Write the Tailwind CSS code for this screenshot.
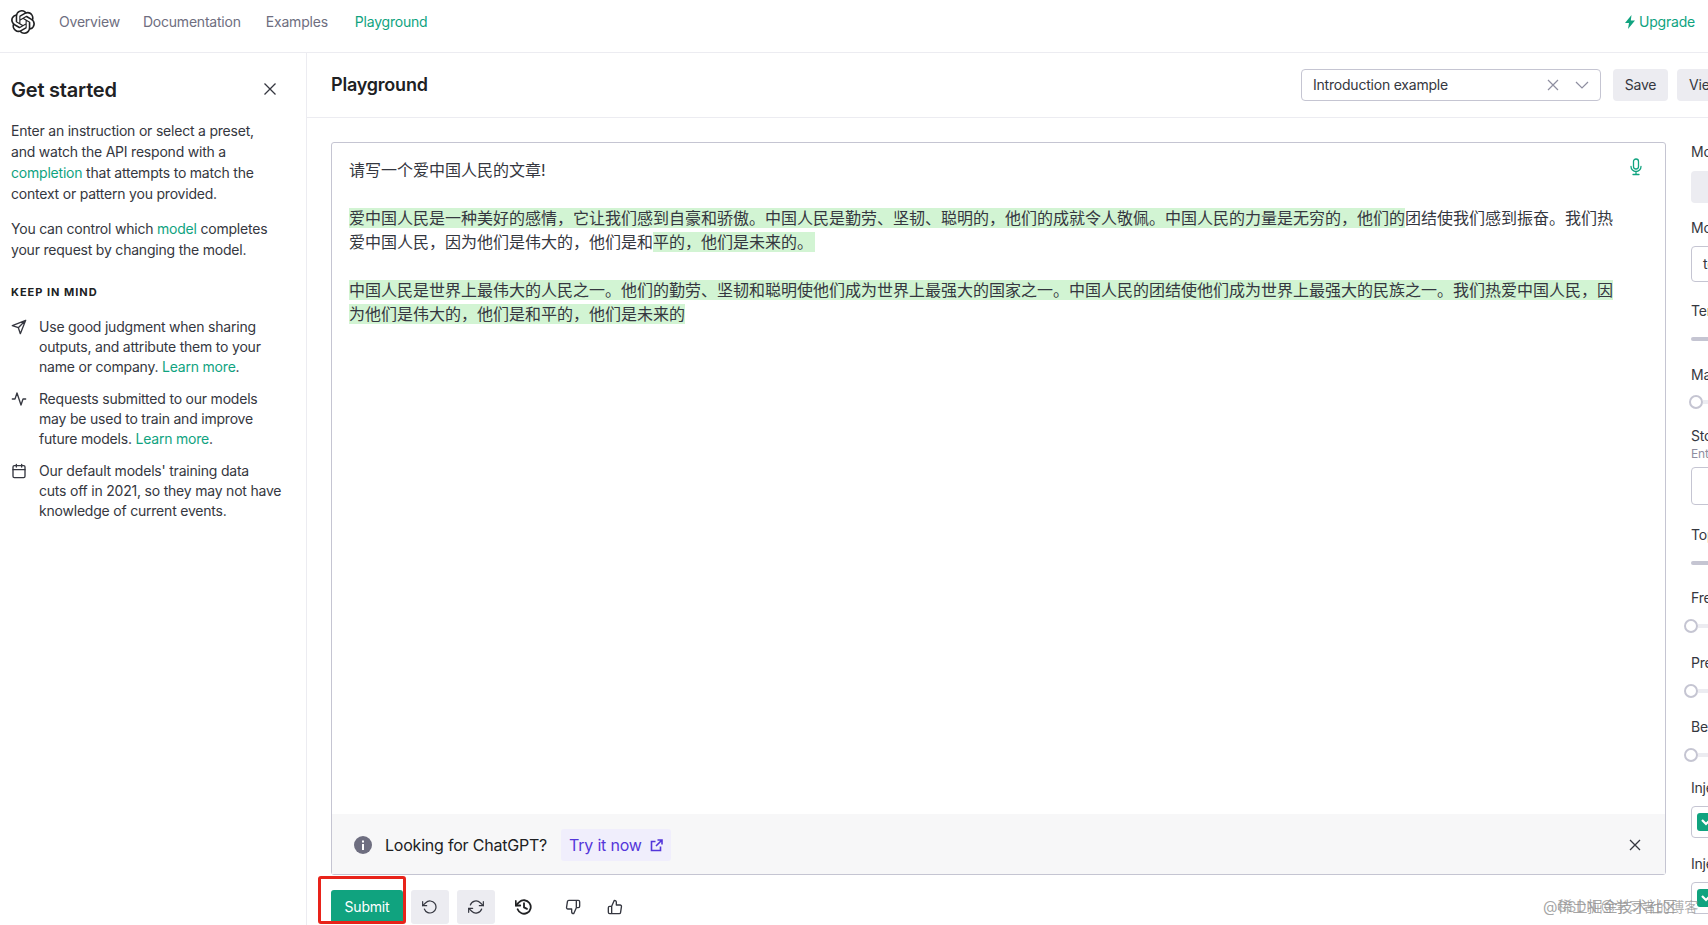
<!DOCTYPE html>
<html>
  <head>
    <meta charset="UTF-8" />
    <title>Playground - OpenAI API</title>
    <script src="https://cdn.jsdelivr.net/npm/@tailwindcss/browser@4"></script>
  </head>
  <body class="h-[925px] w-[1708px] overflow-hidden bg-white text-[#353740] text-sm tracking-[-0.015em] [font-family:Inter,'Noto_Sans_CJK_SC',sans-serif] relative">
    <!-- top nav -->
    <nav class="h-[53px] border-b border-[#ececf1] flex items-center pl-[11px] pr-[13px] pb-[9px] text-[#6e6e80]">
      <svg class="w-[24px] h-[24px] mr-[24px] text-[#202123]" viewBox="0 0 24 24" fill="currentColor"><path d="M22.2819 9.8211a5.9847 5.9847 0 0 0-.5157-4.9108 6.0462 6.0462 0 0 0-6.5098-2.9A6.0651 6.0651 0 0 0 4.9807 4.1818a5.9847 5.9847 0 0 0-3.9977 2.9 6.0462 6.0462 0 0 0 .7427 7.0966 5.98 5.98 0 0 0 .511 4.9107 6.051 6.051 0 0 0 6.5146 2.9001A5.9847 5.9847 0 0 0 13.2599 24a6.0557 6.0557 0 0 0 5.7718-4.2058 5.9894 5.9894 0 0 0 3.9977-2.9001 6.0557 6.0557 0 0 0-.7475-7.0729zm-9.022 12.6081a4.4755 4.4755 0 0 1-2.8764-1.0408l.1419-.0804 4.7783-2.7582a.7948.7948 0 0 0 .3927-.6813v-6.7369l2.02 1.1686a.071.071 0 0 1 .038.052v5.5826a4.504 4.504 0 0 1-4.4945 4.4944zm-9.6607-4.1254a4.4708 4.4708 0 0 1-.5346-3.0137l.142.0852 4.783 2.7582a.7712.7712 0 0 0 .7806 0l5.8428-3.3685v2.3324a.0804.0804 0 0 1-.0332.0615L9.74 19.9502a4.4992 4.4992 0 0 1-6.1408-1.6464zM2.3408 7.8956a4.485 4.485 0 0 1 2.3655-1.9728V11.6a.7664.7664 0 0 0 .3879.6765l5.8144 3.3543-2.0201 1.1685a.0757.0757 0 0 1-.071 0l-4.8303-2.7865A4.504 4.504 0 0 1 2.3408 7.872zm16.5963 3.8558L13.1038 8.364 15.1192 7.2a.0757.0757 0 0 1 .071 0l4.8303 2.7913a4.4944 4.4944 0 0 1-.6765 8.1042v-5.6772a.79.79 0 0 0-.407-.667zm2.0107-3.0231l-.142-.0852-4.7735-2.7818a.7759.7759 0 0 0-.7854 0L9.409 9.2297V6.8974a.0662.0662 0 0 1 .0284-.0615l4.8303-2.7866a4.4992 4.4992 0 0 1 6.6802 4.66zM8.3065 12.863l-2.02-1.1638a.0804.0804 0 0 1-.038-.0567V6.0742a4.4992 4.4992 0 0 1 7.3757-3.4537l-.142.0805L8.704 5.459a.7948.7948 0 0 0-.3927.6813zm1.0976-2.3654l2.602-1.4998 2.6069 1.4998v2.9994l-2.5974 1.4997-2.6067-1.4997Z"/></svg>
      <a class="mr-[23px]">Overview</a>
      <a class="mr-[25px]">Documentation</a>
      <a class="mr-[27px]">Examples</a>
      <a class="text-[#10a37f]">Playground</a>
      <a class="ml-auto flex items-center gap-[3px] text-[#10a37f]">
        <svg class="w-[12px] h-[14px]" viewBox="0 0 12 14" fill="currentColor"><path d="M7.500 0 1 8h4l-1 6 7-8.500H6.800z"/></svg>
        Upgrade
      </a>
    </nav>

    <div class="flex h-[872px]">
      <!-- sidebar -->
      <aside class="w-[307px] shrink-0 border-r border-[#ececf1] pl-[11px] pr-[28px] leading-[21px]">
        <div class="flex items-center justify-between pr-[1px] mt-[24px] mb-[17px]">
          <h2 class="text-xl font-semibold text-[#202123] leading-[26px]">Get started</h2>
          <svg class="w-[14px] h-[14px] mb-[2px] text-[#353740]" viewBox="0 0 14 14" fill="none" stroke="currentColor" stroke-width="1.3"><path d="M1.500 1.500l11 11M12.500 1.500l-11 11"/></svg>
        </div>
        <p class="mb-[14px]">Enter an instruction or select a preset, and watch the API respond with a <a class="text-[#10a37f]">completion</a> that attempts to match the context or pattern you provided.</p>
        <p class="mb-[22px]">You can control which <a class="text-[#10a37f]">model</a> completes your request by changing the model.</p>
        <h3 class="text-[11px] font-bold tracking-[0.09em] text-[#202123] leading-[20px] mb-[15px]">KEEP IN MIND</h3>
        <ul class="flex flex-col gap-[12px] leading-[20px]">
          <li class="flex gap-[12px]">
            <svg class="w-[16px] h-[16px] shrink-0 mt-[2px]" viewBox="0 0 24 24" fill="none" stroke="currentColor" stroke-width="2" stroke-linejoin="round" stroke-linecap="round"><path d="M22 2 2 10l9 3 3 9zM22 2 11 13"/></svg>
            <span>Use good judgment when sharing outputs, and attribute them to your name or company. <a class="text-[#10a37f]">Learn more</a>.</span>
          </li>
          <li class="flex gap-[12px]">
            <svg class="w-[16px] h-[16px] shrink-0 mt-[2px]" viewBox="0 0 24 24" fill="none" stroke="currentColor" stroke-width="2" stroke-linejoin="round" stroke-linecap="round"><path d="M22 12h-4l-3 9L9 3l-3 9H2"/></svg>
            <span>Requests submitted to our models may be used to train and improve future models. <a class="text-[#10a37f]">Learn more</a>.</span>
          </li>
          <li class="flex gap-[12px]">
            <svg class="w-[16px] h-[16px] shrink-0 mt-[2px]" viewBox="0 0 24 24" fill="none" stroke="currentColor" stroke-width="2" stroke-linejoin="round" stroke-linecap="round"><rect x="3" y="4" width="18" height="18" rx="2"/><path d="M16 2v4M8 2v4M3 10h18"/></svg>
            <span class="whitespace-nowrap">Our default models' training data<br>cuts off in 2021, so they may not have<br>knowledge of current events.</span>
          </li>
        </ul>
      </aside>

      <main class="w-[1500px] shrink-0">
        <!-- title row -->
        <div class="h-[65px] border-b border-[#ececf1] flex items-center pl-[24px]">
          <h1 class="text-lg font-semibold text-[#202123] w-[970px]">Playground</h1>
          <div class="w-[300px] h-[32px] border border-[#c5c5d2] rounded-[4px] flex items-center pl-[11px] pr-[11px]">
            <span>Introduction example</span>
            <svg class="ml-auto w-[12px] h-[12px] text-[#8e8ea0]" viewBox="0 0 12 12" fill="none" stroke="currentColor" stroke-width="1.2"><path d="M1 1l10 10M11 1 1 11"/></svg>
            <svg class="ml-[16px] w-[14px] h-[9px] text-[#8e8ea0]" viewBox="0 0 14 9" fill="none" stroke="currentColor" stroke-width="1.2"><path d="M1 1l6 6 6-6"/></svg>
          </div>
          <button class="ml-[12px] w-[55px] h-[32px] bg-[#ececf1] rounded-[4px]">Save</button>
          <button class="ml-[9px] h-[32px] px-[12px] bg-[#ececf1] rounded-[4px] whitespace-nowrap">View code</button>
        </div>

        <div class="flex pl-[24px] pt-[24px]">
          <div class="w-[1335px] shrink-0">
            <!-- editor -->
            <div class="h-[733px] border border-[#c5c5d2] rounded-[3px] flex flex-col relative">
              <svg class="absolute top-[15px] right-[22px] w-[14px] h-[18px] text-[#10a37f]" viewBox="0 0 14 18" fill="none" stroke="currentColor" stroke-width="1.3" stroke-linecap="round"><rect x="4.500" y="1" width="5" height="10" rx="2.500"/><path d="M2 8.500a5 5 0 0 0 10 0M7 13.500v3M4 16.500h6"/></svg>
              <div class="flex-1 pl-[17px] pt-[15px] text-base leading-[24px] tracking-normal whitespace-nowrap text-[#353740]">
                <div>请写一个爱中国人民的文章!</div>
                <div class="mt-[24px]"><span class="inline-block h-[20px] leading-[20px] bg-[#d2f4d3]">爱中国人民是一种美好的感情，它让我们感到自豪和骄傲。中国人民是勤劳、坚韧、聪明的，他们的成就令人敬佩。中国人民的力量是无穷的，他们的</span>团结使我们感到振奋。我们热</div>
                <div>爱中国人民，因为他们是伟大的，他们是和<span class="inline-block h-[20px] leading-[20px] bg-[#d2f4d3] pr-[2px]">平的，他们是未来的。</span></div>
                <div class="mt-[24px]"><span class="inline-block h-[20px] leading-[20px] bg-[#d2f4d3]">中国人民是世界上最伟大的人民之一。他们的勤劳、坚韧和聪明使他们成为世界上最强大的国家之一。中国人民的团结使他们成为世界上最强大的民族之一。我们热爱中国人民，因</span></div>
                <div><span class="inline-block h-[20px] leading-[20px] bg-[#d2f4d3]">为他们是伟大的，他们是和平的，他们是未来的</span></div>
              </div>
              <!-- ChatGPT banner -->
              <div class="h-[60px] bg-[#f7f7f8] flex items-center pl-[22px] pr-[24px] pt-[2px] text-base">
                <svg class="w-[18px] h-[18px] text-[#6e6e80]" viewBox="0 0 18 18"><circle cx="9" cy="9" r="9" fill="currentColor"/><rect x="8" y="8" width="2" height="6" fill="#fff"/><rect x="8" y="4.500" width="2" height="2" fill="#fff"/></svg>
                <span class="ml-[13px] text-[#202123]">Looking for ChatGPT?</span>
                <a class="ml-[14px] h-[32px] px-[8px] flex items-center gap-[8px] bg-[#f0eefc] rounded-[3px] text-[#5436da]">
                  Try it now
                  <svg class="w-[13px] h-[13px]" viewBox="0 0 13 13" fill="none" stroke="currentColor" stroke-width="1.6"><path d="M10.500 7.500v4h-9v-9h4M7.500 1h4.500v4.500M12 1 6 7"/></svg>
                </a>
                <svg class="ml-auto w-[12px] h-[12px] text-[#353740]" viewBox="0 0 12 12" fill="none" stroke="currentColor" stroke-width="1.3"><path d="M1 1l10 10M11 1 1 11"/></svg>
              </div>
            </div>

            <!-- action row -->
            <div class="flex items-center mt-[15px] h-[34px]">
              <button class="w-[72px] h-[34px] bg-[#10a37f] text-white rounded-[3px]">Submit</button>
              <button class="ml-[8px] w-[38px] h-[34px] bg-[#ececf1] rounded-[3px] flex items-center justify-center">
                <svg class="w-[16px] h-[16px]" viewBox="0 0 24 24" fill="none" stroke="currentColor" stroke-width="1.8" stroke-linecap="round" stroke-linejoin="round"><path d="M1 4v6h6"/><path d="M3.500 15a9 9 0 1 0 2.100-9.400L1 10"/></svg>
              </button>
              <button class="ml-[8px] w-[38px] h-[34px] bg-[#ececf1] rounded-[3px] flex items-center justify-center">
                <svg class="w-[16px] h-[16px]" viewBox="0 0 24 24" fill="none" stroke="currentColor" stroke-width="1.8" stroke-linecap="round" stroke-linejoin="round"><path d="M23 4v6h-6M1 20v-6h6"/><path d="M3.500 9a9 9 0 0 1 14.900-3.400L23 10M1 14l4.600 4.400A9 9 0 0 0 20.500 15"/></svg>
              </button>
              <svg class="ml-[20px] w-[18px] h-[18px] text-[#202123]" viewBox="0 0 24 24" fill="none" stroke="currentColor" stroke-width="2.400" stroke-linecap="round" stroke-linejoin="round"><path d="M1 4v6h6"/><path d="M3.500 15a9 9 0 1 0 2.100-9.400L1 10"/><path d="M12 7v5.500l4 2"/></svg>
              <svg class="ml-[32px] w-[16px] h-[16px]" viewBox="0 0 24 24" fill="none" stroke="currentColor" stroke-width="2" stroke-linecap="round" stroke-linejoin="round"><path d="M10 15v4a3 3 0 0 0 3 3l4-9V2H5.700a2 2 0 0 0-2 1.700l-1.400 9a2 2 0 0 0 2 2.300zM17 2h3a2 2 0 0 1 2 2v7a2 2 0 0 1-2 2h-3"/></svg>
              <svg class="ml-[26px] w-[16px] h-[16px]" viewBox="0 0 24 24" fill="none" stroke="currentColor" stroke-width="2" stroke-linecap="round" stroke-linejoin="round"><path d="M14 9V5a3 3 0 0 0-3-3l-4 9v11h11.300a2 2 0 0 0 2-1.700l1.400-9a2 2 0 0 0-2-2.300zM7 22H4a2 2 0 0 1-2-2v-7a2 2 0 0 1 2-2h3"/></svg>
            </div>
          </div>

          <!-- settings column -->
          <div class="ml-[25px] w-[220px] shrink-0 leading-[20px]">
            <div>Mode</div>
            <div class="mt-[9px] h-[32px] bg-[#ececf1] rounded-[4px]"></div>
            <div class="mt-[15px]">Model</div>
            <div class="mt-[8px] h-[36px] border border-[#c5c5d2] rounded-[4px] pl-[11px] leading-[34px] whitespace-nowrap">text-davinci-003</div>
            <div class="mt-[19px]">Temperature</div>
            <div class="mt-[16px] h-[4px] bg-[#c5c5d2] rounded-full w-[200px]"></div>
            <div class="mt-[24px]">Maximum length</div>
            <div class="mt-[10px] h-[14px] flex items-center"><span class="w-[14px] h-[14px] -ml-[2px] rounded-full border-2 border-[#c5c5d2] bg-white shrink-0"></span><span class="h-[4px] w-[180px] bg-[#ececf1]"></span></div>
            <div class="mt-[17px] leading-[20px]">Stop sequences</div>
            <div class="text-xs text-[#8e8ea0] leading-[16px]">Enter sequence and press Tab</div>
            <div class="mt-[5px] h-[38px] border border-[#c5c5d2] rounded-[4px]"></div>
            <div class="mt-[20px]">Top P</div>
            <div class="mt-[16px] h-[4px] bg-[#c5c5d2] rounded-full w-[200px]"></div>
            <div class="mt-[23px]">Frequency penalty</div>
            <div class="mt-[11px] h-[14px] flex items-center"><span class="w-[14px] h-[14px] -ml-[7px] rounded-full border-2 border-[#c5c5d2] bg-white shrink-0"></span><span class="h-[4px] w-[180px] bg-[#ececf1]"></span></div>
            <div class="mt-[20px]">Presence penalty</div>
            <div class="mt-[11px] h-[14px] flex items-center"><span class="w-[14px] h-[14px] -ml-[7px] rounded-full border-2 border-[#c5c5d2] bg-white shrink-0"></span><span class="h-[4px] w-[180px] bg-[#ececf1]"></span></div>
            <div class="mt-[19px]">Best of</div>
            <div class="mt-[11px] h-[14px] flex items-center"><span class="w-[14px] h-[14px] -ml-[7px] rounded-full border-2 border-[#c5c5d2] bg-white shrink-0"></span><span class="h-[4px] w-[180px] bg-[#ececf1]"></span></div>
            <div class="mt-[16px]">Inject start text</div>
            <div class="mt-[8px] h-[32px] border border-[#c5c5d2] rounded-[4px] flex items-center pl-[5px]">
              <span class="w-[18px] h-[18px] rounded-[3px] bg-[#10a37f] flex items-center justify-center"><svg class="w-[12px] h-[12px]" viewBox="0 0 12 12" fill="none" stroke="#fff" stroke-width="2.200"><path d="M2 4l4 4 4-4"/></svg></span>
            </div>
            <div class="mt-[16px]">Inject restart text</div>
            <div class="mt-[8px] h-[32px] border border-[#c5c5d2] rounded-[4px] flex items-center pl-[5px]">
              <span class="w-[18px] h-[18px] rounded-[3px] bg-[#10a37f] flex items-center justify-center"><svg class="w-[12px] h-[12px]" viewBox="0 0 12 12" fill="none" stroke="#fff" stroke-width="2.200"><path d="M2 4l4 4 4-4"/></svg></span>
            </div>
          </div>
        </div>
      </main>
    </div>

    <!-- red annotation around submit -->
    <div class="absolute left-[318px] top-[876px] w-[88px] h-[48px] border-[3px] border-[#e8231a] rounded-[3px]"></div>
    <!-- overlaid watermarks -->
    <div class="absolute left-[1543px] top-[897px] text-[#8e8e8e]/80 whitespace-nowrap leading-[20px] text-[15px] tracking-normal">@稀土掘金技术社区</div>
    <div class="absolute left-[1557px] top-[897px] text-[#8e8e8e]/70 whitespace-nowrap leading-[20px] text-[14px] tracking-normal">CSDN @学习者的博客</div>
  </body>
</html>
